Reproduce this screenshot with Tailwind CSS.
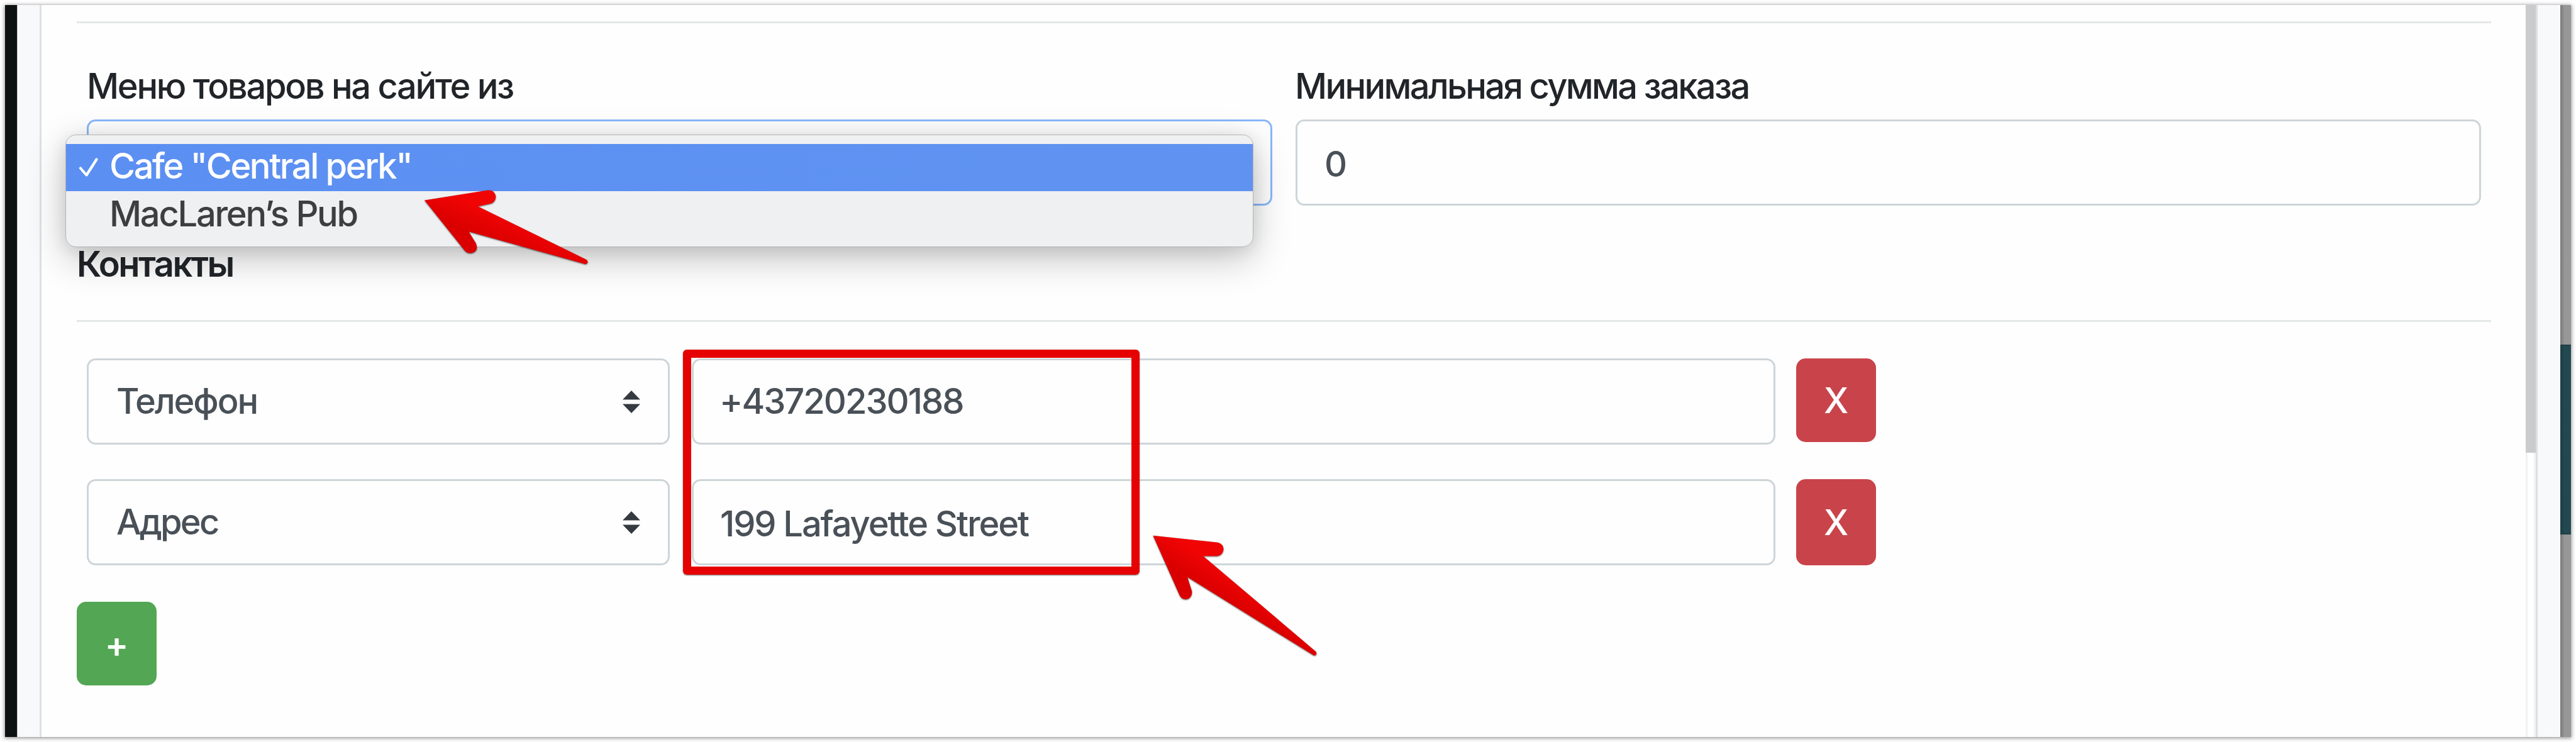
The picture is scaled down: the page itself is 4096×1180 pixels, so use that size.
<!DOCTYPE html>
<html lang="ru">
  <head>
    <meta charset="UTF-8" />
    <meta name="viewport" content="width=device-width, initial-scale=1.0" />

    <title>Настройки сайта</title>

    <script src="https://cdn.jsdelivr.net/npm/@tailwindcss/browser@4"></script>
  </head>

  <body
    class="relative w-[4096px] h-[1180px] overflow-hidden bg-white p-2 font-['Inter','Liberation_Sans',sans-serif] font-[450] text-[56px] text-[#495057]"
  >
    <div
      class="flex w-[4080px] h-[1164px] bg-[#fefefe] shadow-[0_1px_6px_1px_rgba(0,0,0,0.42)]"
    >
      <!-- Left edge -->
      <div class="w-5 bg-[#0e1112] border-r border-[#c4c5c6]"></div>
      <div class="w-[35px] bg-[#f8f9fb]"></div>

      <!-- Form -->
      <main
        class="w-[3953px] border-l-[3px] border-[#dee0e1] pt-[26px] pl-[56px] pr-[55px] text-[#212529]"
      >
        <hr class="border-0 h-[3px] bg-[#e4e7e7]" />

        <div class="grid grid-cols-2 gap-[37px] px-4 pt-[58px]">
          <div>
            <label class="block h-[84px] leading-[84px] mb-[11px] tracking-[-2.3px]"
              >Меню товаров на сайте из</label
            >
            <div class="relative h-[137px]">
              <div
                class="h-full rounded-[14px] border-[3px] border-[#89b7fb]"
              ></div>

              <!-- Opened list -->
              <ul
                class="absolute z-10 left-[-34px] top-[24px] w-[1889px] h-[179px] pt-[14px] rounded-[17px] border border-[#b4b5b7] bg-[#eff0f2] shadow-[0_18px_60px_rgba(0,0,0,0.24),0_4px_26px_rgba(0,0,0,0.09)]"
              >
                <li
                  class="flex items-start h-[75px] pl-[20px] bg-linear-to-r from-[#5b8ff2] to-[#6093f1] text-white"
                >
                  <svg
                    class="w-[32px] h-[32px] mr-[17px] mt-[21px]"
                    viewBox="0 0 32 32"
                    fill="none"
                    stroke="currentColor"
                    stroke-width="4.2"
                    stroke-linecap="round"
                    stroke-linejoin="round"
                  >
                    <path d="M3 17.5 L12.5 28.5 L28.5 3.5" />
                  </svg>
                  <span class="leading-[71px] tracking-[-2.4px]"
                    >Cafe "Central perk"</span
                  >
                </li>
                <li
                  class="h-[75px] pl-[69px] leading-[72px] tracking-[-2.25px] text-[#3d3e40]"
                >
                  MacLaren’s Pub
                </li>
              </ul>
            </div>
          </div>

          <div>
            <label
              class="block h-[84px] leading-[84px] mb-[11px] -ml-px tracking-[-2.65px]"
              >Минимальная сумма заказа</label
            >
            <div
              class="h-[137px] rounded-[14px] border-[3px] border-[#cdd5d9] pl-[43px] pt-[3px] leading-[131px] text-[#495057]"
            >
              0
            </div>
          </div>
        </div>

        <h2 class="mt-[51px] leading-[84px] font-semibold tracking-[-2.5px]">
          Контакты
        </h2>
        <hr class="mt-[47px] border-0 h-[3px] bg-[#e4e7e7]" />

        <div class="flex flex-col gap-[55px] pt-[58px] pl-4 text-[#495057]">
          <div class="flex items-start h-[137px]">
            <div
              class="flex items-center justify-between w-[927px] h-[137px] mr-[35px] rounded-[14px] border-[3px] border-[#cdd5d9] pl-[44px] pr-[44px]"
            >
              <span class="tracking-[-2.1px] -mt-[2px]">Телефон</span>
              <svg class="w-[28px] h-[36px]" viewBox="0 0 28 36" fill="#343a40">
                <path d="M0 14.5 L14 0 L28 14.5 Z M0 21.5 H28 L14 36 Z" />
              </svg>
            </div>
            <div
              class="w-[1723px] h-[137px] mr-[33px] rounded-[14px] border-[3px] border-[#cdd5d9] pl-[41px] leading-[131px] tracking-[-2px]"
            >
              +43720230188
            </div>
            <button
              class="w-[127px] h-[133px] rounded-[15px] bg-[#c9444a] text-white"
            >
              X
            </button>
          </div>

          <div class="flex items-start h-[137px]">
            <div
              class="flex items-center justify-between w-[927px] h-[137px] mr-[35px] rounded-[14px] border-[3px] border-[#cdd5d9] pl-[44px] pr-[44px]"
            >
              <span class="tracking-[-2.8px] -mt-[2px]">Адрес</span>
              <svg class="w-[28px] h-[36px]" viewBox="0 0 28 36" fill="#343a40">
                <path d="M0 14.5 L14 0 L28 14.5 Z M0 21.5 H28 L14 36 Z" />
              </svg>
            </div>
            <div
              class="w-[1723px] h-[137px] mr-[33px] rounded-[14px] border-[3px] border-[#cdd5d9] pl-[42px] pt-[3px] leading-[131px] tracking-[-2.1px]"
            >
              199 Lafayette Street
            </div>
            <button
              class="w-[127px] h-[137px] rounded-[15px] bg-[#c9444a] text-white"
            >
              X
            </button>
          </div>
        </div>

        <button
          class="block mt-[58px] w-[127px] h-[133px] pt-[3px] rounded-[15px] bg-[#53a653] font-semibold text-white"
        >
          +
        </button>
      </main>

      <!-- Scrollbar -->
      <div class="w-[16px] border-x-[3px] border-[#f1f2f2] bg-white">
        <div class="w-[16px] h-[712px] -ml-[3px] bg-[#cacbcd]"></div>
      </div>
      <div class="w-[3px] bg-[#dedfe1]"></div>
      <div class="w-[36px] bg-[#f8f9fb]"></div>

      <!-- Right edge -->
      <div class="flex-1 pt-[540px] bg-linear-to-r from-[#77797a] to-[#979798] to-40%">
        <div
          class="h-[302px] bg-linear-to-r from-[#1c3d43] to-[#23484f] to-40% border-y-2 border-[#1e3f46]"
        ></div>
      </div>
    </div>

    <!-- Highlight frame -->
    <div
      class="absolute left-[1086px] top-[556px] w-[726px] h-[358px] rounded-[6px] border-[13px] border-[#e60202] shadow-[0_1px_2px_rgba(0,0,0,0.55)]"
    ></div>

    <!-- Arrows -->
    <svg
      class="absolute left-0 top-0 w-[4096px] h-[1180px] z-20 drop-shadow-[0_1px_1px_rgba(0,0,0,0.6)]"
      viewBox="0 0 5040 1452"
    >
      <defs>
        <linearGradient
          id="red1"
          gradientUnits="userSpaceOnUse"
          x1="937"
          y1="403"
          x2="917"
          y2="453"
        >
          <stop offset="0" stop-color="#f00404" />
          <stop offset="1" stop-color="#da0000" />
        </linearGradient>
        <linearGradient
          id="red2"
          gradientUnits="userSpaceOnUse"
          x1="2354"
          y1="1088"
          x2="2327"
          y2="1131"
        >
          <stop offset="0" stop-color="#f00404" />
          <stop offset="1" stop-color="#da0000" />
        </linearGradient>
      </defs>
      <path
        fill="url(#red1)"
        d="M830.5 392 L953 372.5 Q967 371 970 384 Q970 395 961 398 L935 404 L1147 508 Q1151 511 1149.500 514.500 Q1147 518 1142 516 L917 453 L931 476 Q936 488 928 493 Q917 499 909 490 Z"
      />
      <path
        fill="url(#red2)"
        d="M2256 1048 L2383 1061.500 Q2393 1064 2394 1075 Q2392 1087 2382 1088 L2354 1088 L2574.500 1275 Q2577 1279 2574.500 1281.500 Q2572 1284 2568 1281 L2323 1129 L2332 1157 Q2333 1168 2324 1172 Q2313 1175 2308 1165 Z"
      />
    </svg>
  </body>
</html>
